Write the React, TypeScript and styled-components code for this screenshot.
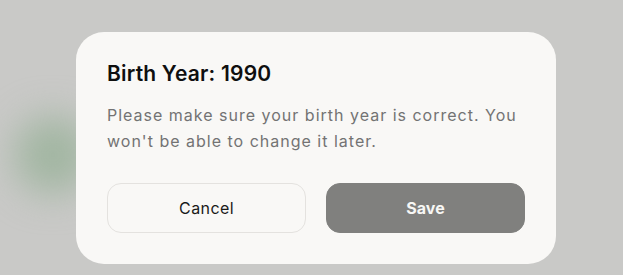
import styled, { createGlobalStyle } from 'styled-components';

const GlobalStyle = createGlobalStyle`
  html, body {
    margin: 0;
    padding: 0;
    background: #c9c9c7;
    font-family: Inter, "Noto Sans", sans-serif;
    -webkit-font-smoothing: antialiased;
  }
`;

const Page = styled.div`
  position: relative;
  width: 623px;
  height: 275px;
  overflow: hidden;
  background: #c9c9c7;
`;

const Backdrop = styled.div`
  position: absolute;
  inset: 0;
  overflow: hidden;
`;

const BlurSpot = styled.div<{ $x: number; $y: number; $size: number; $color: string }>`
  position: absolute;
  left: ${(p) => p.$x}px;
  top: ${(p) => p.$y}px;
  width: ${(p) => p.$size}px;
  height: ${(p) => p.$size}px;
  border-radius: 50%;
  background: ${(p) => p.$color};
  filter: blur(18px);
`;

const Layer = styled.div`
  position: relative;
  padding: 32px 0 0 76px;
`;

const Dialog = styled.div`
  box-sizing: border-box;
  width: 480px;
  padding: 28px 31px 31px;
  background: #f9f8f6;
  border-radius: 28px;
`;

const Title = styled.h2`
  margin: 0;
  font-size: 21px;
  line-height: 28px;
  font-weight: 600;
  color: #0f0f0f;
  letter-spacing: 0.2px;
`;

const Message = styled.p`
  margin: 14px 0 0;
  font-size: 16px;
  line-height: 26px;
  font-weight: 400;
  color: #737373;
  letter-spacing: 1px;
`;

const Actions = styled.div`
  display: grid;
  grid-template-columns: 1fr 1fr;
  gap: 20px;
  margin-top: 29px;
`;

const Button = styled.button<{ $primary?: boolean }>`
  box-sizing: border-box;
  height: 50px;
  border-radius: 14px;
  font-family: inherit;
  font-size: 16px;
  cursor: pointer;
  border: 1px solid ${(p) => (p.$primary ? '#80807e' : '#e4e2df')};
  background: ${(p) => (p.$primary ? '#80807e' : '#f9f8f6')};
  color: ${(p) => (p.$primary ? '#f7f7f5' : '#1a1a1a')};
  font-weight: ${(p) => (p.$primary ? 700 : 400)};
  letter-spacing: ${(p) => (p.$primary ? '0' : '0.4px')};
`;

export default function App() {
  return (
    <Page>
      <GlobalStyle />
      <Backdrop>
        <BlurSpot $x={14} $y={116} $size={78} $color="#a2b6a2" />
      </Backdrop>
      <Layer>
        <Dialog>
          <Title>Birth Year: 1990</Title>
          <Message>
            Please make sure your birth year is correct. You won't be able to
            change it later.
          </Message>
          <Actions>
            <Button>Cancel</Button>
            <Button $primary>Save</Button>
          </Actions>
        </Dialog>
      </Layer>
    </Page>
  );
}
